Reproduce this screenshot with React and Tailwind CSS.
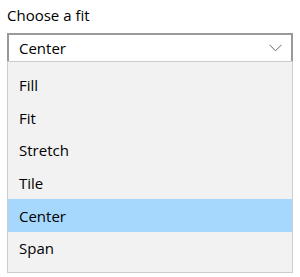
import React from 'react';

const OPTIONS = ['Fill', 'Fit', 'Stretch', 'Tile', 'Center', 'Span'];

export default function App() {
  const selected = 'Center';
  return (
    <div className="w-[300px] h-[277px] bg-white px-[7px] pt-[4px] text-[15px] text-black font-['Open_Sans','Noto_Sans',sans-serif]">
      <div className="h-[29px] leading-[22px]">Choose a fit</div>
      <div className="relative w-[286px]">
        {/* combo box */}
        <div className="h-[28px] border-2 border-b-0 border-[#999999] flex items-center pl-[10px] pr-[8px]">
          <span className="flex-1 leading-[22px]">{selected}</span>
          <svg width="13" height="8" viewBox="0 0 13 8" className="mr-[1px]">
            <path d="M0.5 0.8 L6.5 6.8 L12.5 0.8" fill="none" stroke="#666" strokeWidth="1" />
          </svg>
        </div>
        {/* dropdown list */}
        <div className="bg-[#f2f2f2] border border-[#cccccc] py-[7px]">
          {OPTIONS.map((o) => (
            <div
              key={o}
              className={
                'h-[32.6px] flex items-center pl-[11px] leading-[22px] ' +
                (o === selected ? 'bg-[#a6d8fd]' : '')
              }
            >
              {o}
            </div>
          ))}
        </div>
      </div>
    </div>
  );
}
